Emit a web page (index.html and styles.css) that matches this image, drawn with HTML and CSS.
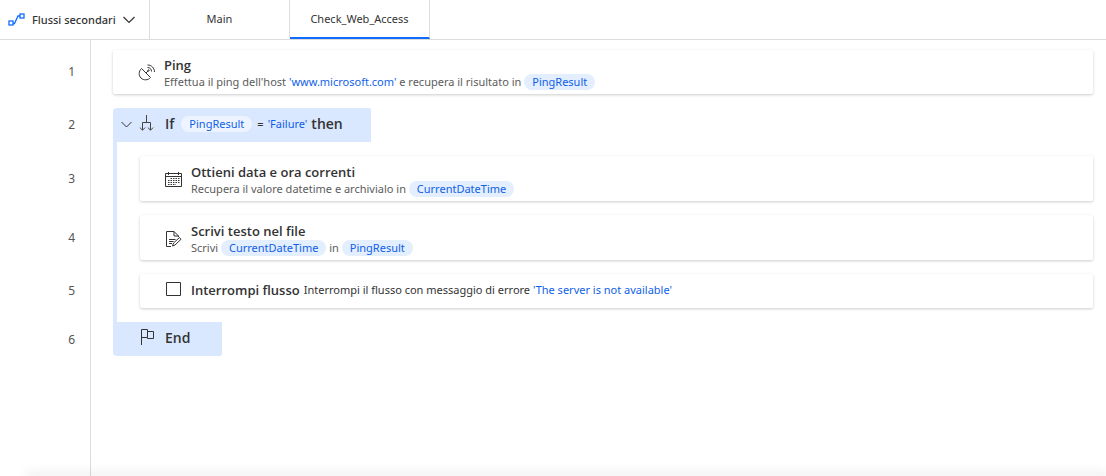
FILE: index.html
```html
<!DOCTYPE html>
<html lang="it">
<head>
<meta charset="utf-8">
<meta name="viewport" content="width=device-width, initial-scale=1">
<title>Check_Web_Access</title>
<link rel="stylesheet" href="styles.css">
</head>
<body>
<header class="tabs">
  <button class="subflows" type="button">
    <svg width="17" height="14" viewBox="0 0 17 14" fill="none" stroke="#0f6cff" stroke-width="1.3"><rect x="1" y="8" width="4" height="4"/><rect x="12" y="1" width="4" height="4"/><path d="M5 10.500h1.500L10 3h2"/></svg>
    <span class="subflows-label">Flussi secondari</span>
    <svg width="12" height="8" viewBox="0 0 12 8" fill="none" stroke="#333" stroke-width="1.200"><path d="M.5 1L6 6.500 11.500 1"/></svg>
  </button>
  <button class="tab" type="button">Main</button>
  <button class="tab tab-active" type="button">Check_Web_Access</button>
</header>
<main class="flow">
  <section class="row row-first">
    <span class="number">1</span>
    <div class="track">
      <article class="card">
        <svg class="icon" width="18" height="18" viewBox="0 0 18 18" fill="none" stroke="#333"><path d="M3.500 4.500C.5 7.500.5 11.500 3 14s7 2.500 9.500-.5zM8 9l2-2"/><circle cx="10.500" cy="6.500" r=".7"/><path d="M9.500 3.500c2.500 0 4 1.500 4 4M9.500 1c4 0 7 3 7 7"/></svg>
        <div class="text">
          <h2 class="title">Ping</h2>
          <p class="detail">Effettua il ping dell'host <span class="value">'www.microsoft.com'</span> e recupera il risultato in <span class="pill">PingResult</span></p>
        </div>
      </article>
    </div>
  </section>
  <section class="row">
    <span class="number">2</span>
    <div class="track">
      <div class="block block-start">
        <button class="collapse" type="button" aria-label="Comprimi"><svg width="11" height="7" viewBox="0 0 11 7" fill="none" stroke="#333"><path d="M.5 1l5 5 5-5"/></svg></button>
        <svg class="icon" width="16" height="20" viewBox="0 0 16 20" fill="none" stroke="#444"><path d="M7.500 1v7.500M3.500 16V8.500h8V16M.8 13.500l2.700 2.700 2.700-2.700M8.800 13.500l2.700 2.700 2.700-2.700"/></svg>
        <p class="condition"><b class="title keyword">If</b><span class="pill pill-light">PingResult</span><span class="operator">=</span><span class="value">'Failure'</span><b class="title then">then</b></p>
      </div>
    </div>
  </section>
  <section class="row nested">
    <span class="number">3</span>
    <div class="track">
      <article class="card">
        <svg class="icon" width="18" height="18" viewBox="0 0 18 18" fill="none" stroke="#333"><path d="M.5 2.500h16v13H.5zM.5 5.500h16M3.500 1v3M13.500 1v3"/><path stroke-dasharray="1.500 1" d="M5.500 7.500h9M3 9.500h11.500M3 11.500h11.500M3 13.500h8"/></svg>
        <div class="text">
          <h2 class="title">Ottieni data e ora correnti</h2>
          <p class="detail">Recupera il valore datetime e archivialo in <span class="pill">CurrentDateTime</span></p>
        </div>
      </article>
    </div>
  </section>
  <section class="row nested">
    <span class="number">4</span>
    <div class="track">
      <article class="card">
        <svg class="icon" width="18" height="18" viewBox="0 0 18 18" fill="none" stroke="#333"><path d="M6 16.500H1.500v-15H9L13.500 6v1M9 1.500V6h4.500M4 9.500h6.500M4 11.500h4.500M4 13.500h3M7.500 16l1-3 6-5.500 1.500 1.800-6 5.700z"/></svg>
        <div class="text">
          <h2 class="title">Scrivi testo nel file</h2>
          <p class="detail">Scrivi <span class="pill">CurrentDateTime</span> in <span class="pill">PingResult</span></p>
        </div>
      </article>
    </div>
  </section>
  <section class="row nested nested-last">
    <span class="number">5</span>
    <div class="track">
      <article class="card card-inline">
        <svg class="icon" width="18" height="18" viewBox="0 0 18 18" fill="none" stroke="#333"><path d="M1.500 1.500h14v13h-14z"/></svg>
        <div class="text text-inline">
          <h2 class="title">Interrompi flusso</h2>
          <p class="detail detail-dark">Interrompi il flusso con messaggio di errore <span class="value">'The server is not available'</span></p>
        </div>
      </article>
    </div>
  </section>
  <section class="row row-end">
    <span class="number">6</span>
    <div class="track">
      <div class="block block-end">
        <svg class="icon" width="16" height="20" viewBox="0 0 16 20" fill="none" stroke="#333"><path d="M1.500 17V1.500h6v8h-6M7.500 3.500h6v7h-6v-1"/></svg>
        <b class="title keyword">End</b>
      </div>
    </div>
  </section>
</main>
<footer class="bottom-edge"></footer>
</body>
</html>
```
FILE: styles.css
```css
* {
  box-sizing: border-box;
}

body {
  margin: 0;
  min-height: 100vh;
  display: flex;
  flex-direction: column;
  overflow-x: hidden;
  background: #fff;
  color: #333;
  font: 11px/16px "Noto Sans", "Open Sans", sans-serif;
}

button {
  margin: 0;
  padding: 0;
  border: 0;
  background: none;
  color: inherit;
  font: inherit;
}

svg {
  display: block;
  flex: none;
}

.tabs {
  display: flex;
  height: 40px;
  border-bottom: 1px solid #dcdcdc;
}

.subflows {
  display: flex;
  align-items: center;
  gap: 7px;
  width: 150px;
  padding-left: 8px;
  border-right: 1px solid #dcdcdc;
  font-weight: 500;
  white-space: nowrap;
}

.tab {
  width: 140px;
  border-right: 1px solid #dcdcdc;
  border-bottom: 2px solid transparent;
}

.tab-active {
  border-bottom-color: #0f6cff;
}

.flow {
  flex: 1;
  background: linear-gradient(#dcdcdc, #dcdcdc) 90px 0 / 1px 100% no-repeat;
}

.row {
  display: grid;
  grid-template-columns: 91px 1fr;
}

.number {
  display: flex;
  align-items: center;
  justify-content: flex-end;
  padding: 14px 16px 0 0;
  color: #555;
  font-size: 12px;
}

.track {
  padding: 14px 13px 0 22px;
}

.row-first .number,
.row-first .track {
  padding-top: 10px;
}

.nested .track {
  margin-left: 22px;
  border-left: 4px solid #dae8ff;
  padding-left: 23px;
}

.nested-last .number,
.nested-last .track {
  padding-bottom: 14px;
}

.row-end .number,
.row-end .track {
  padding-top: 0;
}

.row-end .number {
  padding-top: 2px;
}

.card {
  display: flex;
  align-items: center;
  gap: 8px;
  min-height: 34px;
  padding: 6px 8px 4px 25px;
  border-radius: 2px;
  background: #fff;
  box-shadow: 0 1px 3px rgba(0, 0, 0, .2);
}

.nested .card {
  min-height: 45px;
}

.nested .card-inline {
  min-height: 34px;
  padding-top: 2px;
}

.text {
  min-width: 0;
}

.text-inline {
  display: flex;
  align-items: center;
  gap: 4px;
}

.title {
  margin: 0;
  color: #333;
  font: 600 13px/18px "Open Sans", "Noto Sans", sans-serif;
}

.detail {
  margin: 0;
  color: #5c5c5c;
}

.detail-dark {
  color: #333;
}

.value {
  color: #0f5fe8;
}

.pill {
  display: inline-block;
  padding: 0 8px;
  border-radius: 8px;
  background: #e3eeff;
  color: #0f5fe8;
}

.pill-light {
  background: #edf4ff;
}

.block {
  display: flex;
  align-items: center;
  height: 34px;
  background: #dae8ff;
}

.block-start {
  gap: 7px;
  width: 258px;
  padding-left: 8px;
  padding-bottom: 2px;
  border-radius: 4px 2px 0 0;
}

.condition {
  display: flex;
  align-items: center;
  margin: 0;
  padding-left: 3px;
  white-space: nowrap;
}

.keyword,
.then {
  font-size: 14px;
}

.condition .keyword {
  margin-right: 7px;
}

.operator {
  margin: 0 4px 0 5px;
}

.then {
  margin-left: 4px;
}

.block-end {
  gap: 9px;
  width: 109px;
  padding-left: 27px;
  padding-bottom: 2px;
  border-radius: 0 0 2px 4px;
}

.bottom-edge {
  margin-left: 28px;
  box-shadow: 0 0 12px 2px rgba(0, 0, 0, .14);
}
```
